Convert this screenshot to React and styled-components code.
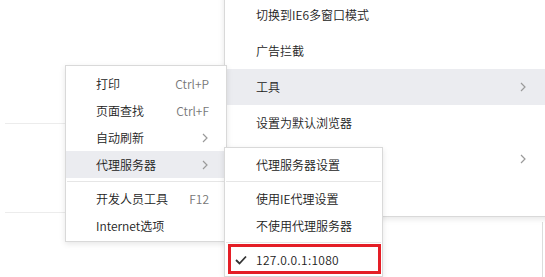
import React from "react";
import styled, { createGlobalStyle } from "styled-components";

const Global = createGlobalStyle`
  html, body { margin: 0; padding: 0; background: #fff; }
  body { font-family: "Noto Sans CJK SC", "Noto Sans", sans-serif; color: #333; }
  * { box-sizing: border-box; }
`;

const Page = styled.div`
  position: relative;
  width: 545px;
  height: 277px;
  overflow: hidden;
  background: #fff;
`;

const Backdrop = styled.div`
  display: flex;
  flex-direction: column;
  padding: 123px 0 0 5px;
  gap: 88px;
`;

const Rule = styled.div`
  width: 200px;
  height: 1px;
  background: #ececec;
`;

const ScrollEdge = styled.div`
  position: absolute;
  left: 542px;
  top: 222px;
  width: 1px;
  height: 60px;
  background: #dcdcdc;
`;

const Menu = styled.div`
  position: absolute;
  left: ${(p) => p.$left}px;
  top: ${(p) => p.$top}px;
  width: ${(p) => p.$width}px;
  background: #fff;
  border: 1px solid #d9d9d9;
  box-shadow: 0 2px 6px rgba(0, 0, 0, 0.1);
  padding: ${(p) => p.$pad};
  display: flex;
  flex-direction: column;
  z-index: ${(p) => p.$z};
`;

const Item = styled.div`
  display: flex;
  align-items: center;
  height: ${(p) => p.$h}px;
  padding: 0 ${(p) => p.$pr}px 0 ${(p) => p.$pl}px;
  font-size: 12px;
  font-weight: 350;
  line-height: 1;
  white-space: nowrap;
  background: ${(p) => (p.$hover ? "#ebecf0" : "transparent")};
  position: relative;
`;

const Label = styled.span`
  flex: 1;
  color: #222;
`;

const Mono = styled.span`
  letter-spacing: 0.3px;
`;

const Shortcut = styled.span`
  color: #777;
  font-size: 12px;
`;

const Separator = styled.div`
  height: 1px;
  margin: 3px 1px;
  background: #e6e6e6;
`;

const CheckSlot = styled.span`
  position: absolute;
  left: 10px;
  top: 50%;
  transform: translateY(-50%);
  display: flex;
`;

const Highlight = styled.div`
  position: absolute;
  left: 228px;
  top: 244px;
  width: 153px;
  height: 30px;
  border: 3px solid #e41e26;
  z-index: 10;
`;

const Chevron = () => (
  <svg width="6" height="10" viewBox="0 0 6 10">
    <polyline points="1,1 5,5 1,9" fill="none" stroke="#9a9a9a" strokeWidth="1.2" />
  </svg>
);

const Check = () => (
  <svg width="12" height="10" viewBox="0 0 12 10">
    <polyline points="1,5 4.5,8.5 11,1.5" fill="none" stroke="#333" strokeWidth="1.8" />
  </svg>
);

export default function App() {
  return (
    <>
      <Global />
      <Page>
        <Backdrop>
          <Rule />
          <Rule />
        </Backdrop>
        <ScrollEdge />

        <Menu $left={224} $top={-7} $width={340} $pad="3px 0" $z={1}>
          <Item $h={36} $pl={31} $pr={37}><Label>切换到IE6多窗口模式</Label></Item>
          <Item $h={36} $pl={31} $pr={37}><Label>广告拦截</Label></Item>
          <Item $h={36} $pl={31} $pr={37} $hover><Label>工具</Label><Chevron /></Item>
          <Item $h={36} $pl={31} $pr={37}><Label>设置为默认浏览器</Label></Item>
          <Item $h={36} $pl={31} $pr={37}><Label /><Chevron /></Item>
          <Item $h={36} $pl={31} $pr={37}><Label /></Item>
        </Menu>

        <Menu $left={65} $top={65} $width={162} $pad="4px 0 2px" $z={2}>
          <Item $h={27} $pl={30} $pr={17}><Label>打印</Label><Shortcut>Ctrl+P</Shortcut></Item>
          <Item $h={27} $pl={30} $pr={17}><Label>页面查找</Label><Shortcut>Ctrl+F</Shortcut></Item>
          <Item $h={27} $pl={30} $pr={18}><Label>自动刷新</Label><Chevron /></Item>
          <Item $h={27} $pl={30} $pr={18} $hover><Label>代理服务器</Label><Chevron /></Item>
          <Separator />
          <Item $h={27} $pl={30} $pr={17}><Label>开发人员工具</Label><Shortcut>F12</Shortcut></Item>
          <Item $h={27} $pl={30} $pr={17}><Label>Internet选项</Label></Item>
        </Menu>

        <Menu $left={224} $top={147} $width={159} $pad="3px 0" $z={3}>
          <Item $h={27} $pl={31} $pr={10}><Label>代理服务器设置</Label></Item>
          <Separator />
          <Item $h={27} $pl={31} $pr={10}><Label>使用IE代理设置</Label></Item>
          <Item $h={27} $pl={31} $pr={10}><Label>不使用代理服务器</Label></Item>
          <Separator />
          <Item $h={27} $pl={31} $pr={10}>
            <CheckSlot><Check /></CheckSlot>
            <Label><Mono>127.0.0.1:1080</Mono></Label>
          </Item>
        </Menu>

        <Highlight />
      </Page>
    </>
  );
}
